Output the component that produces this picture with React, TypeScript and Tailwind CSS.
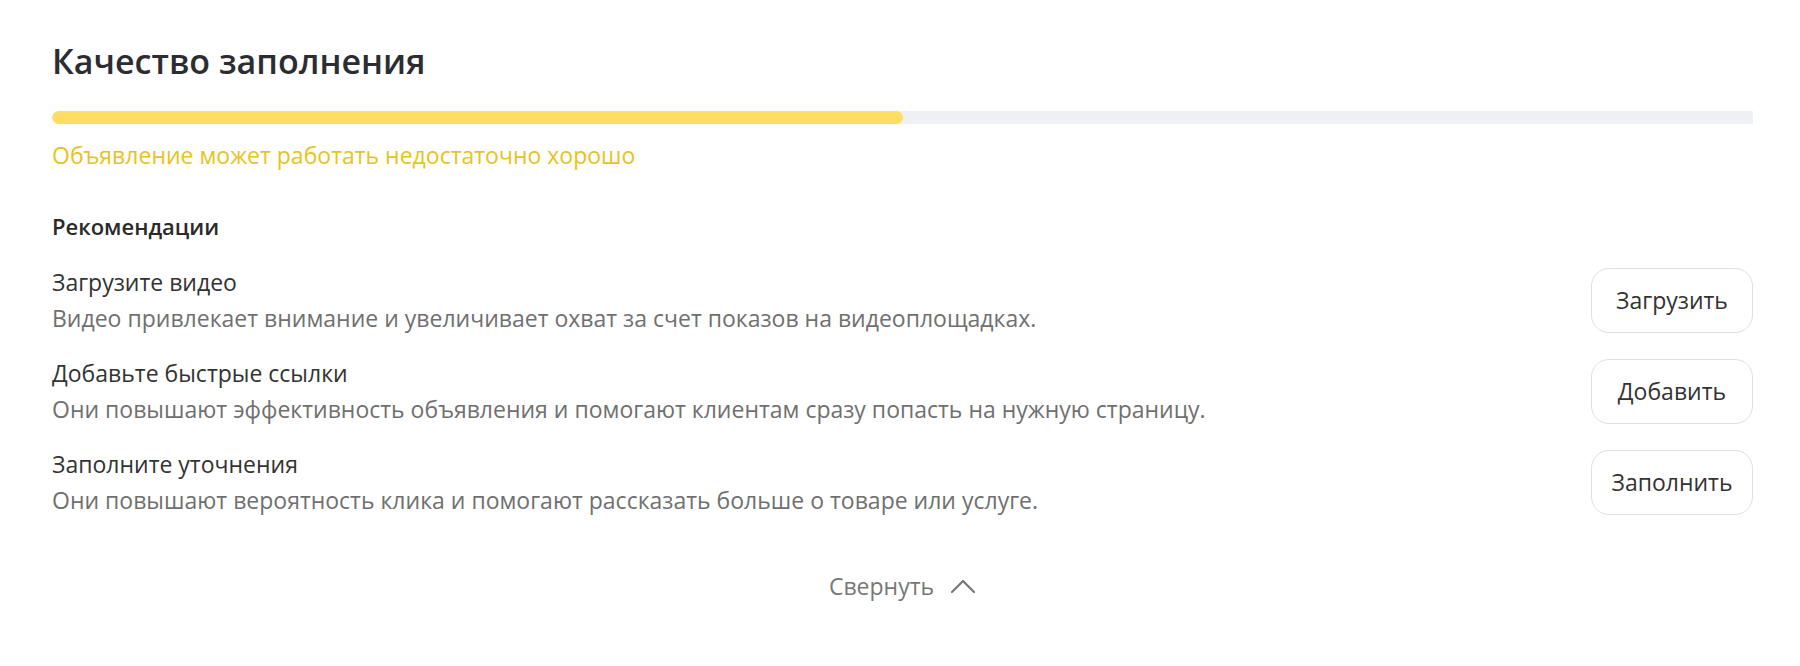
const items = [
  {
    title: "Загрузите видео",
    text: "Видео привлекает внимание и увеличивает охват за счет показов на видеоплощадках.",
    action: "Загрузить",
  },
  {
    title: "Добавьте быстрые ссылки",
    text: "Они повышают эффективность объявления и помогают клиентам сразу попасть на нужную страницу.",
    action: "Добавить",
  },
  {
    title: "Заполните уточнения",
    text: "Они повышают вероятность клика и помогают рассказать больше о товаре или услуге.",
    action: "Заполнить",
  },
];

const progress = 50;

const App = () => {
  return (
    <div className="min-h-[666px] w-full bg-white pl-[52px] pr-[47px] pt-[37px] font-['Open_Sans',sans-serif] text-[#21242b]">
      <h1 className="text-[34px] font-semibold leading-[48px] text-[#2b2d33]">Качество заполнения</h1>
      <div className="mt-[26px] h-[13px] w-full overflow-hidden rounded-l-full bg-[#eff0f4]">
        <div className="h-full rounded-full bg-[#fddd62]" style={{ width: `${progress}%` }} />
      </div>
      <p className="mt-[16px] text-[23px] leading-[30px] text-[#e7c31e]">
        Объявление может работать недостаточно хорошо
      </p>
      <h2 className="mt-[42px] text-[22px] font-semibold leading-[28px] text-[#2a2a2a]">Рекомендации</h2>
      <div className="mt-[27px] flex flex-col gap-[25px]">
        {items.map((item) => (
          <div key={item.title} className="flex items-center justify-between">
            <div className="flex flex-col gap-[6px]">
              <span className="text-[23px] leading-[30px] text-[#333]">{item.title}</span>
              <span className="text-[23px] leading-[30px] text-[#707070]">{item.text}</span>
            </div>
            <button className="h-[65px] w-[162px] rounded-[18px] border border-[#e0e0e0] bg-white text-[23px] text-[#333]">
              {item.action}
            </button>
          </div>
        ))}
      </div>
      <div className="mt-[56px] flex items-center justify-center gap-[16px] text-[23px] leading-[30px] text-[#777]">
        <span>Свернуть</span>
        <svg width="26" height="16" viewBox="0 0 26 16" fill="none">
          <path d="M2 14 L13 3 L24 14" stroke="#777" strokeWidth="2.2" strokeLinecap="round" strokeLinejoin="round" />
        </svg>
      </div>
    </div>
  );
};

export default App;
